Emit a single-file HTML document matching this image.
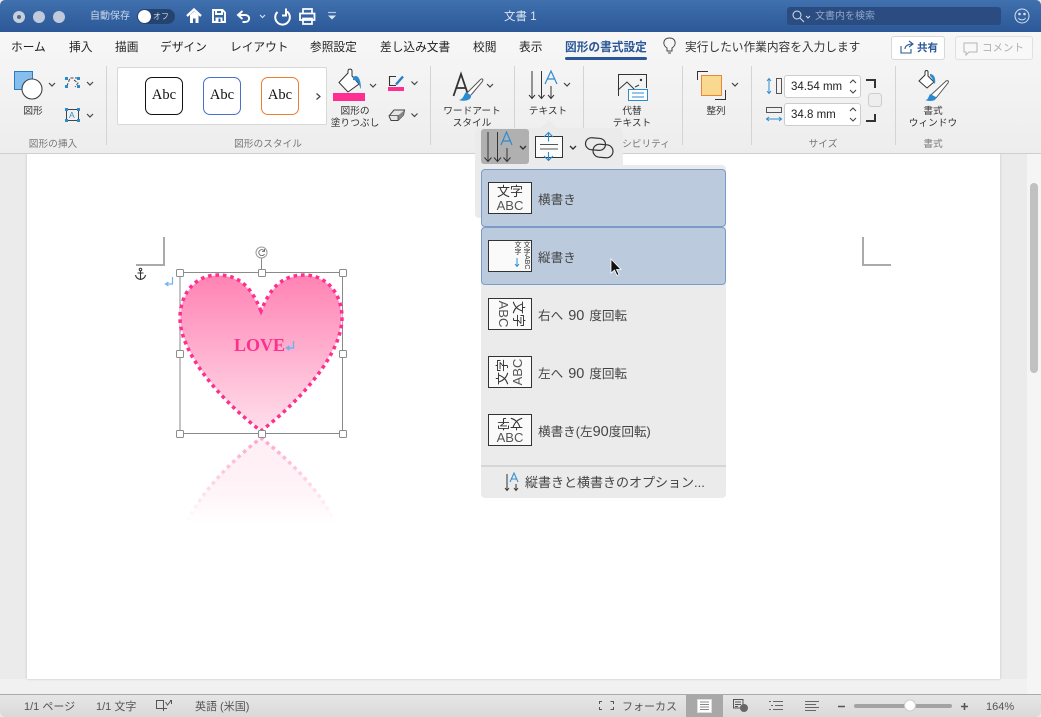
<!DOCTYPE html>
<html lang="ja"><head><meta charset="utf-8">
<style>
html,body{margin:0;padding:0}
body{width:1041px;height:717px;overflow:hidden;position:relative;background:#ebebeb;font-family:"Liberation Sans","Noto Sans CJK JP",sans-serif;color:#333}
.a{position:absolute}
.t{position:absolute;white-space:nowrap;line-height:14px}
svg{position:absolute;left:0;top:0;overflow:visible}
.tab{position:absolute;top:40px;font-size:11.7px;line-height:16px;color:#222;white-space:nowrap}
.gl{position:absolute;top:139px;font-size:9.7px;line-height:12px;color:#777;white-space:nowrap;transform:translateX(-50%)}
.lb{position:absolute;font-size:9.7px;line-height:11.5px;color:#333;text-align:center;white-space:nowrap;transform:translateX(-50%)}
.sep{position:absolute;top:66px;width:1px;height:79px;background:#d4d4d4}
.abc{position:absolute;top:77px;width:38px;height:38px;border-radius:7px;background:#fff;font-family:"Liberation Serif",serif;font-size:14.5px;line-height:34px;text-align:center;color:#111;box-sizing:border-box;border:1px solid #000}
.inp{position:absolute;left:784px;width:77px;height:23px;background:#fff;border:1px solid #cdcdcd;border-radius:3px;box-sizing:border-box;font-size:11.5px;line-height:22px;padding-left:6px;color:#222}
.mi{position:absolute;left:481px;width:245px;height:58px;background:#bccadd;border:1px solid #7b9cc9;border-radius:4px;box-sizing:border-box}
.ic{position:absolute;left:488px;width:44px;height:32px;background:#fafafa;border:1px solid #333;box-sizing:border-box;overflow:hidden}
.ic span{position:absolute;width:42px;left:0;text-align:center;white-space:nowrap;color:#333;line-height:14px;font-size:13px}
.ic span.e{color:#555}
.ml{position:absolute;left:538px;font-size:12.6px;line-height:16px;color:#444;white-space:nowrap;word-spacing:1.5px}
.ml b{font-weight:normal;font-size:14.5px}
.h{position:absolute;width:6px;height:6px;background:#fff;border:1px solid #8c8c8c;border-radius:1.5px}
.st{position:absolute;top:700px;font-size:11px;line-height:14px;color:#555;white-space:nowrap}
</style></head><body>

<!-- title bar -->
<div class="a" style="left:0;top:0;width:1041px;height:32px;background:linear-gradient(#4070ad,#2c5898);border-radius:5px 5px 0 0"></div>
<div class="a" style="left:13px;top:11px;width:12px;height:12px;border-radius:50%;background:#c6cfdc"></div>
<div class="a" style="left:17px;top:15px;width:4px;height:4px;border-radius:50%;background:#55698a"></div>
<div class="a" style="left:33px;top:11px;width:12px;height:12px;border-radius:50%;background:#c0cada"></div>
<div class="a" style="left:53px;top:11px;width:12px;height:12px;border-radius:50%;background:#c0cada"></div>
<div class="t" style="left:90px;top:10px;font-size:10px;color:#c9d7ea">自動保存</div>
<div class="a" style="left:137px;top:9px;width:38px;height:15px;border-radius:8px;background:#24446f"></div>
<div class="a" style="left:138px;top:10px;width:13px;height:13px;border-radius:50%;background:#fff"></div>
<div class="t" style="left:153px;top:10px;font-size:8px;color:#c9d7ea">オフ</div>
<svg width="1041" height="32" fill="none" stroke="#fff" stroke-width="2">
<path d="M187 16L194 9.500L201 16" stroke-width="2.300"/>
<path d="M190 15V23H193V18.500H195.500V23H198.500V15L194.200 11.500Z" fill="#fff" stroke="none"/>
<path d="M213 10H222.500L225 12.500V22H213Z M216 10V14H222V10.500" stroke-width="1.900"/>
<rect x="215.500" y="17.500" width="7" height="5" fill="#fff" stroke="none"/>
<rect x="218.500" y="18.500" width="2" height="3.500" fill="#2f5b9b" stroke="none"/>
<path d="M238 15H245C250.500 15 250.500 22 245 22H242.500M242.500 11L238 15L242.500 19"/>
<path d="M260 15L262.500 17.500L265 15" stroke-width="1.200" stroke="#d5e0ef"/>
<path d="M277.500 12A7.300 7.300 0 1 0 287 11.500" stroke-width="2"/>
<path d="M286 8.500V15.500H282" stroke-width="2"/>
<path d="M300 13.500H314.500V20H300Z" stroke-width="1.800"/>
<path d="M303 13V9H312V13M303 18.500H312V24H303Z" stroke-width="1.700"/>
<path d="M328 12.500H336" stroke="#b5c6de" stroke-width="1.200"/>
<path d="M328 15.500H336L332 19.500Z" fill="#dce6f3" stroke="none"/>
</svg>
<div class="t" style="left:504px;top:10px;font-size:11.5px;color:#dbe5f2">文書 1</div>
<div class="a" style="left:787px;top:7px;width:214px;height:18px;border-radius:3px;background:#2a4c80"></div>
<svg width="1041" height="32" fill="none" stroke="#d6e0ee" stroke-width="1">
<circle cx="797" cy="15" r="4"/>
<path d="M800 18L804 22M806 16L808 18L810 16"/>
<circle cx="1022" cy="16" r="7"/>
<circle cx="1019.500" cy="14" r=".8" fill="#d6e0ee"/>
<circle cx="1024.500" cy="14" r=".8" fill="#d6e0ee"/>
<path d="M1018.500 18C1020 20.500 1024 20.500 1025.500 18"/>
</svg>
<div class="t" style="left:815px;top:10px;font-size:10px;color:#8ea6c8">文書内を検索</div>

<!-- document area -->
<div class="a" style="left:0;top:679px;width:1041px;height:15px;background:#f1f1f1"></div>
<div class="a" style="left:27px;top:154px;width:973px;height:525px;background:#fff;box-shadow:0 0 2px #bbb"></div>
<div class="a" style="left:1027px;top:154px;width:14px;height:540px;background:#f5f5f5"></div>
<div class="a" style="left:1030px;top:183px;width:8px;height:190px;border-radius:4px;background:#c1c1c1"></div>

<!-- ribbon -->
<div class="a" style="left:0;top:32px;width:1041px;height:121px;background:linear-gradient(#f7f7f7,#ededed)"></div>
<div class="a" style="left:0;top:153px;width:1041px;height:1px;background:#cfcfcf"></div>
<div class="tab" style="left:11px">ホーム</div>
<div class="tab" style="left:69px">挿入</div>
<div class="tab" style="left:115px">描画</div>
<div class="tab" style="left:160px">デザイン</div>
<div class="tab" style="left:230px">レイアウト</div>
<div class="tab" style="left:310px">参照設定</div>
<div class="tab" style="left:380px">差し込み文書</div>
<div class="tab" style="left:473px">校閲</div>
<div class="tab" style="left:519px">表示</div>
<div class="tab" style="left:565px;color:#2b5797;font-weight:bold">図形の書式設定</div>
<div class="a" style="left:565px;top:57px;width:82px;height:3px;border-radius:2px;background:#2b5797"></div>
<svg width="1041" height="160" fill="none" stroke="#444" stroke-width="1">
<path d="M667 48C662 45 663 38 669.500 38C676 38 677 45 672 48V51H667Z M668 53H671"/>
</svg>
<div class="tab" style="left:685px;color:#333">実行したい作業内容を入力します</div>
<div class="a" style="left:891px;top:36px;width:54px;height:24px;background:#fff;border:1px solid #d8d8d8;border-radius:3px;box-sizing:border-box"></div>
<svg width="1041" height="160" fill="none" stroke="#2b5797" stroke-width="1.100">
<path d="M901 46V53H911V49M905 49C905 46 908 44 912 44M909 41L913 44L909 47"/>
</svg>
<div class="t" style="left:917px;top:41px;font-size:10.500px;color:#2b5797;font-weight:bold">共有</div>
<div class="a" style="left:955px;top:36px;width:78px;height:24px;background:#f8f8f8;border:1px solid #e0e0e0;border-radius:3px;box-sizing:border-box"></div>
<svg width="1041" height="160" fill="none" stroke="#b5b5b5" stroke-width="1">
<path d="M964 43H977V52H969L966 55V52H964Z"/>
</svg>
<div class="t" style="left:982px;top:41px;font-size:10.500px;color:#b0b0b0">コメント</div>

<div class="sep" style="left:106px"></div>
<div class="sep" style="left:430px"></div>
<div class="sep" style="left:514px"></div>
<div class="sep" style="left:583px"></div>
<div class="sep" style="left:682px"></div>
<div class="sep" style="left:751px"></div>
<div class="sep" style="left:895px"></div>

<!-- shapes insertion -->
<svg width="1041" height="160" fill="none" stroke-width="1">
<rect x="14.500" y="71.500" width="18" height="18" fill="#86bfee" stroke="#2b7cc4"/>
<circle cx="32" cy="89" r="10" fill="#fff" stroke="#444" stroke-width="1.100"/>
<path d="M49 83L52 86L55 83M87 82L90 85L93 82M87 114L90 117L93 114M370 84L373 87L376 84M411.500 81.500L414.500 84.500L417.500 81.500M411.500 113.500L414.500 116.500L417.500 113.500" stroke="#444" stroke-width="1.200"/>
<path d="M67 86L70 78H77M74 80L78 83L75 87" stroke="#444" stroke-dasharray="3 1.500"/>
<rect x="65" y="85" width="3" height="3" fill="#2b8bd0"/><rect x="77" y="85" width="3" height="3" fill="#2b8bd0"/><rect x="65" y="77" width="3" height="3" fill="#2b8bd0"/><rect x="77" y="77" width="3" height="3" fill="#2b8bd0"/>
<rect x="66.500" y="109.500" width="12" height="11" stroke="#444"/>
<rect x="65" y="108" width="3" height="3" fill="#2b8bd0"/><rect x="77" y="108" width="3" height="3" fill="#2b8bd0"/><rect x="65" y="119" width="3" height="3" fill="#2b8bd0"/><rect x="77" y="119" width="3" height="3" fill="#2b8bd0"/>
</svg>
<div class="t" style="left:69px;top:108px;font-size:8.500px;color:#2b8bd0">A</div>
<div class="lb" style="left:33px;top:106px">図形</div>
<div class="gl" style="left:53px">図形の挿入</div>

<!-- styles gallery -->
<div class="a" style="left:117px;top:67px;width:210px;height:58px;background:#fff;border:1px solid #d8d8d8;border-radius:2px;box-sizing:border-box"></div>
<div class="abc" style="left:145px;border-color:#111">Abc</div>
<div class="abc" style="left:203px;border-color:#4472c4">Abc</div>
<div class="abc" style="left:261px;border-color:#ed7d31">Abc</div>
<svg width="1041" height="160" fill="none">
<path d="M316.500 93.500L320 96.500L316.500 99.500" stroke="#444" stroke-width="1.200"/>
<path d="M339 82.500L348 73V71C348 68.500 352 68.500 352 71V76L359 84L348 92Z" stroke="#333" stroke-width="1" fill="#fff"/>
<path d="M353 77C356 74.500 361 76 361 89C359 86 359 80 353 80Z" fill="#2b8bd0"/>
<rect x="333" y="93" width="32" height="8" fill="#ff2f92"/>
<path d="M396 76.500H389.500V85.500H396" stroke="#333" stroke-width="1.100" fill="none"/>
<path d="M396 84.500L403 76.500" stroke="#2b7cc4" stroke-width="2.400"/>
<rect x="388" y="87" width="16" height="4" fill="#ff2f92"/>
<path d="M389 116L394 110H404.500L403.500 115L398 120.500H391Z" stroke="#444" fill="#e6e6e6" stroke-width="1"/>
<path d="M398 115.500L404 110.500L403.500 115L398 120.500Z" fill="#888"/>
<path d="M390 115.500H398L398 120" stroke="#444" stroke-width=".8"/>
</svg>
<div class="lb" style="left:355px;top:106px">図形の<br>塗りつぶし</div>
<div class="gl" style="left:268px">図形のスタイル</div>

<!-- wordart + text -->
<svg width="1041" height="160" fill="none">
<path d="M453.500 96L461 74L468.500 96M456 88H466" stroke="#333" stroke-width="1.800"/>
<path d="M467 93L480 80C482 78 484 79 482 82L471 95" stroke="#555" stroke-width="1" fill="#fff"/>
<path d="M465.500 92.500C463 97 463 99 459 100C465 102 472 100 471 95Z" fill="#2b8bd0"/>
<path d="M487 84L490 87L493 84M564 83L567 86L570 83M732 83L735 86L738 83" stroke="#444" stroke-width="1.200"/>
<path d="M532 71V98M529 95L532 98.500L535 95M541.500 71V98M538.500 95L541.500 98.500L544.500 95M551 86V98M548 95L551 98.500L554 95" stroke="#333" stroke-width="1"/>
<path d="M545 84L551 71L557 84M547 79H555" stroke="#2b8bd0" stroke-width="1.200"/>
</svg>
<div class="lb" style="left:472px;top:106px">ワードアート<br>スタイル</div>
<div class="lb" style="left:548px;top:106px">テキスト</div>

<!-- alt text -->
<svg width="1041" height="160" fill="none" stroke-width="1">
<path d="M618.500 96V74.500H646.500V88" stroke="#333"/>
<path d="M618 90L627 82L635 90M635 87L639 85" stroke="#333"/>
<circle cx="641" cy="80" r="1.200" fill="#333"/>
<rect x="628.500" y="89.500" width="19" height="11" fill="#fff" stroke="#2b8bd0"/>
<path d="M632 93H644M632 97H644" stroke="#2b8bd0"/>
</svg>
<div class="lb" style="left:632px;top:106px">代替<br>テキスト</div>
<div class="gl" style="left:646px">シビリティ</div>

<!-- arrange -->
<svg width="1041" height="160" fill="none" stroke-width="1">
<path d="M697.500 80V71.500H708M725.500 90V99.500H715" stroke="#333"/>
<rect x="701.500" y="75.500" width="20" height="20" fill="#f8d98f" stroke="#e8873a"/>
</svg>
<div class="lb" style="left:716px;top:106px">整列</div>

<!-- size -->
<svg width="1041" height="160" fill="none" stroke-width="1">
<path d="M769 79V93M767 81L769 78.500L771 81M767 91L769 93.500L771 91" stroke="#2b8bd0"/>
<rect x="776.500" y="78.500" width="5" height="15" stroke="#555"/>
<rect x="766.500" y="107.500" width="15" height="5" stroke="#555"/>
<path d="M767 119H781M769 117L766.500 119L769 121M779 117L781.500 119L779 121" stroke="#2b8bd0"/>
<path d="M866 80H875V88M866 121H875V114" stroke="#333" stroke-width="2"/>
<rect x="868.500" y="93.500" width="13" height="13" rx="3" fill="#eee" stroke="#ccc"/>
</svg>
<div class="inp" style="top:75px">34.54 mm</div>
<div class="inp" style="top:103px">34.8 mm</div>
<svg width="1041" height="160" fill="none" stroke="#444" stroke-width="1.100">
<path d="M850 83L853 80L856 83M850 90L853 93L856 90M850 111L853 108L856 111M850 118L853 121L856 118"/>
</svg>
<div class="gl" style="left:823px">サイズ</div>

<!-- format window -->
<svg width="1041" height="160" fill="none" stroke-width="1">
<path d="M919 81L925 75V72C925 70 928 70 928 72V76L934 82L927 88Z" stroke="#333" fill="#fff"/>
<path d="M930 74C934 74 936 78 935 84C933 82 933 78 930 76Z" fill="#2b8bd0"/>
<path d="M931 95L946 81C948 80 949 81 948 83L936 98" stroke="#555" fill="#fff"/>
<path d="M930 94C928 98 928 100 925 100C930 102 937 101 936 97Z" fill="#2b8bd0"/>
</svg>
<div class="lb" style="left:933px;top:106px">書式<br>ウィンドウ</div>
<div class="gl" style="left:933px">書式</div>

<!-- page content -->
<svg width="1041" height="717" fill="none">
<defs>
<linearGradient id="hg" x1="0" y1="0" x2="0" y2="1"><stop offset="0" stop-color="#ff82b3"/><stop offset="1" stop-color="#ffdfeb"/></linearGradient>
<linearGradient id="fd" gradientUnits="userSpaceOnUse" x1="0" y1="436" x2="0" y2="523"><stop offset="0" stop-color="#fff" stop-opacity=".45"/><stop offset="1" stop-color="#fff" stop-opacity="0"/></linearGradient>
<mask id="mk" maskUnits="userSpaceOnUse" x="150" y="430" width="230" height="100"><rect x="150" y="430" width="230" height="100" fill="url(#fd)"/></mask>
<path id="hrt" d="M261 311C254 294 244 275 218 275C194 275 180 295 180 318C180 352 218 398 261 431C304 398 342 352 342 318C342 295 328 275 304 275C278 275 268 294 261 311Z"/>
</defs>
<path d="M136 265H164V237" stroke="#aaa" stroke-width="2"/>
<path d="M863 237V265H891" stroke="#aaa" stroke-width="2"/>
<g mask="url(#mk)"><g transform="translate(0,869) scale(1,-1)">
<use href="#hrt" fill="url(#hg)" stroke="#ff2f8e" stroke-width="3.500" stroke-dasharray="3.600 3.800"/>
</g></g>
<rect x="180" y="272.500" width="162.500" height="161" stroke="#8a8a8a" stroke-width="1"/>
<use href="#hrt" fill="url(#hg)"/>
<use href="#hrt" stroke="#fff" stroke-width="1.500" stroke-opacity=".7"/>
<use href="#hrt" stroke="#ff2f8e" stroke-width="3.500" stroke-dasharray="3.600 3.800"/>
<path d="M261.500 258V272" stroke="#8a8a8a"/>
<circle cx="261.500" cy="252.500" r="5.500" fill="#fff" stroke="#999"/>
<path d="M264 250.500A3 3 0 1 0 264.500 254M264.500 249V251.500H262" stroke="#555" stroke-width=".8"/>
<circle cx="140.500" cy="269.500" r="1.300" stroke="#333"/>
<path d="M140.500 271V279M137.500 273H143.500M135.500 275C136 278 138 279 140.500 279.500C143 279 145 278 145.500 275" stroke="#333" stroke-width="1.100"/>
<path d="M172.500 277V284H166M168.500 282L165.500 284L168.500 286" stroke="#6fb3ee" stroke-width="1.200"/>
<path d="M293.500 341V348H287M289.500 346L286.500 348L289.500 350" stroke="#6fb3ee" stroke-width="1.500"/>
</svg>
<div class="t" style="left:234px;top:336px;font-family:'Liberation Serif',serif;font-weight:bold;font-size:18px;line-height:18px;color:#ff2f8e">LOVE</div>
<div class="h" style="left:176px;top:268.500px"></div>
<div class="h" style="left:257.500px;top:268.500px"></div>
<div class="h" style="left:338.500px;top:268.500px"></div>
<div class="h" style="left:176px;top:349.500px"></div>
<div class="h" style="left:338.500px;top:349.500px"></div>
<div class="h" style="left:176px;top:429.500px"></div>
<div class="h" style="left:257.500px;top:429.500px"></div>
<div class="h" style="left:338.500px;top:429.500px"></div>

<!-- popup toolbar -->
<div class="a" style="left:475px;top:128px;width:148px;height:38px;background:#ebebeb;border-radius:4px 4px 0 0"></div>
<div class="a" style="left:475px;top:160px;width:8px;height:58px;background:#ebebeb;border-radius:0 0 0 4px"></div>
<div class="a" style="left:481px;top:129px;width:48px;height:35px;background:#b0b0b0;border-radius:3px"></div>
<svg width="1041" height="717" fill="none" stroke-width="1">
<path d="M541 128L549 120L557 128Z" fill="#ebebeb"/>
<path d="M488 132V161M484.500 157.500L488 161.500L491.500 157.500M497.500 132V161M494 157.500L497.500 161.500L501 157.500M507 148V161M503.500 157.500L507 161.500L510.500 157.500" stroke="#333"/>
<path d="M501 145L506.500 132L512 145M502.500 141H510.500" stroke="#2b8bd0" stroke-width="1.200"/>
<path d="M520 146L523 149L526 146M570 146L573 149L576 146" stroke="#333" stroke-width="1.400"/>
<rect x="535.500" y="136.500" width="27" height="21" stroke="#333" fill="#fbfbfb"/>
<path d="M540 144.500H558M540 149H558" stroke="#555"/>
<path d="M548.500 133V141.500M544 137L548.500 132.500L553 137M548.500 152V160.500M544 156L548.500 160.500L553 156" stroke="#2b8bd0" stroke-width="1.100"/>
<rect x="585.500" y="138" width="20" height="12" rx="6" stroke="#333" stroke-width="1.200" transform="rotate(5 595 144)"/>
<rect x="593" y="144.500" width="20" height="13" rx="6.500" stroke="#333" stroke-width="1.200" transform="rotate(5 603 151)"/>
</svg>

<!-- dropdown menu -->
<div class="a" style="left:481px;top:165px;width:245px;height:333px;background:#ebebeb;border-radius:4px"></div>
<div class="mi" style="top:169px"></div>
<div class="mi" style="top:227px"></div>
<div class="a" style="left:481px;top:465px;width:245px;height:2px;background:#d6d6d6"></div>

<div class="ic" style="top:182px"><span style="top:2px">文字</span><span class="e" style="top:16px">ABC</span></div>
<div class="ml" style="top:192px">横書き</div>

<div class="ic" style="top:240px">
<span style="left:33px;width:8px;top:0;font-size:7px;line-height:8px;writing-mode:vertical-rl;height:30px;text-align:left">文字ABC</span>
<span style="left:24px;width:8px;top:0;font-size:7px;line-height:8px;writing-mode:vertical-rl;height:16px;text-align:left">文字</span>
<svg width="44" height="32" fill="none"><path d="M28 17V25M26 23L28 25.500L30 23" stroke="#2b8bd0"/></svg>
</div>
<div class="ml" style="top:250px">縦書き</div>

<div class="ic" style="top:298px"><span class="e" style="left:-7px;top:8px;transform:rotate(90deg)">ABC</span><span style="left:7.500px;top:8px;transform:rotate(90deg)">文字</span></div>
<div class="ml" style="top:308px">右へ <b>90</b> 度回転</div>

<div class="ic" style="top:356px"><span style="left:-7px;top:8px;transform:rotate(-90deg)">文字</span><span class="e" style="left:8px;top:8px;transform:rotate(-90deg)">ABC</span></div>
<div class="ml" style="top:366px">左へ <b>90</b> 度回転</div>

<div class="ic" style="top:414px"><span style="top:1px;transform:rotate(180deg)">文字</span><span class="e" style="top:16px">ABC</span></div>
<div class="ml" style="top:424px">横書き(左<b>90</b>度回転)</div>

<svg width="1041" height="717" fill="none" stroke-width="1">
<path d="M507 474V490M505 488L507 490.500L509 488M516 484V490M514 488L516 490.500L518 488" stroke="#333"/>
<path d="M510 482L514 473L518 482M511.500 479H516.500" stroke="#2b8bd0"/>
<path d="M611 259V273L614.500 270L617 275.500L619 274.500L616.500 269.500H621Z" fill="#111" stroke="#fff" stroke-width=".8"/>
</svg>
<div class="ml" style="left:525px;top:475px;font-size:13px">縦書きと横書きのオプション...</div>

<!-- status bar -->
<div class="a" style="left:0;top:694px;width:1041px;height:23px;background:linear-gradient(#e6e6e6,#d9d9d9);border-top:1px solid #aaa;box-sizing:border-box;border-radius:0 0 5px 5px"></div>
<div class="a" style="left:686px;top:695px;width:37px;height:22px;background:#a8a8a8"></div>
<div class="st" style="left:24px">1/1 ページ</div>
<div class="st" style="left:96px">1/1 文字</div>
<div class="st" style="left:195px">英語 (米国)</div>
<div class="st" style="left:622px">フォーカス</div>
<div class="st" style="left:986px">164%</div>
<svg width="1041" height="717" fill="none" stroke-width="1">
<path d="M163.500 700V711M163.500 700.500H156.500V708.500H163.500M163.500 708.500H167M170 700.500H171.500V704" stroke="#555"/>
<path d="M165.500 702L167.500 705L171 700.500" stroke="#555"/>
<path d="M599.500 704V701.500H602M610.500 701.500H613.500V704M599.500 707V709.500H602M610.500 709.500H613.500V707" stroke="#555"/>
<rect x="697.500" y="699.500" width="14" height="13" fill="#fff" stroke="#ddd"/>
<path d="M700 702H709M700 704.500H709M700 707H709M700 709.500H709" stroke="#888"/>
<path d="M733.500 699.500H743V708H733.500ZM735 702H741M735 704.500H741M735 706.500H738" stroke="#555"/>
<circle cx="744" cy="708" r="4" fill="#666"/>
<path d="M769 701.500H771M773 701.500H783M771 705.500H773M775 705.500H783M769 709.500H771M773 709.500H783" stroke="#666"/>
<path d="M805 701.500H819M805 704.500H816M805 707.500H819M805 710.500H816" stroke="#666"/>
<path d="M838 706.500H845M961 706.500H968M964.500 703V710" stroke="#555" stroke-width="1.600"/>
<rect x="854" y="704" width="98" height="4" rx="2" fill="#a3a3a3"/>
<circle cx="910" cy="705.500" r="5.500" fill="#fff" stroke="#ccc"/>
</svg>
</body></html>
